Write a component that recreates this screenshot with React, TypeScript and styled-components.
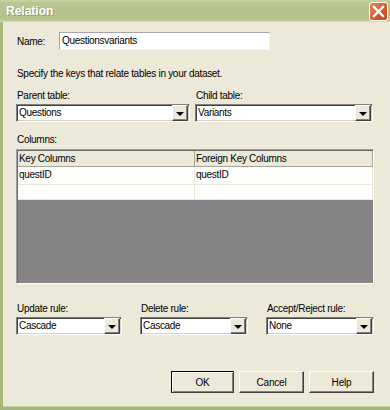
import React from "react";
import styled, { createGlobalStyle } from "styled-components";

const FONT = `"Liberation Sans", Tahoma, Arial, sans-serif`;

const Global = createGlobalStyle`
  html, body { margin: 0; padding: 0; background: #ece9d8; }
  body { font-family: ${FONT}; font-size: 10px; color: #000; }
  * { box-sizing: border-box; }
`;

const Win = styled.div`
  width: 390px;
  height: 410px;
  display: flex;
  flex-direction: column;
  overflow: hidden;
`;

const TitleBar = styled.div`
  height: 22px;
  flex: none;
  display: flex;
  align-items: center;
  justify-content: space-between;
  padding: 0 2px 0 6px;
  background: linear-gradient(#c9d4a4 0px, #b8c58f 3px, #b4c18a 18px, #c3cd9f 21px, #e0e4cf 22px);
`;

const Title = styled.span`
  font-family: ${FONT};
  font-weight: bold;
  font-size: 12px;
  color: #fff;
  text-shadow: 1px 1px 0 #8f9c6a;
`;

const CloseBtn = styled.div`
  width: 19px;
  height: 19px;
  border: 1px solid #fff;
  border-radius: 3px;
  background: linear-gradient(135deg, #e98a5c, #d9552a 60%, #c4431d);
  display: flex;
  align-items: center;
  justify-content: center;
  margin-top: 1px;
`;

const Body = styled.div`
  flex: 1;
  display: flex;
  flex-direction: column;
  border-left: 3px solid #a6b87c;
  border-bottom: 3px solid #a3b57a;
  box-shadow: inset 0 -1px 0 #c8d3a8;
  padding: 10px 16px 0 13px;
  background: #ece9d8;
`;

const Row = styled.div<{ $mt?: number; $gap?: number }>`
  display: flex;
  align-items: flex-start;
  gap: ${(p) => p.$gap ?? 0}px;
  margin-top: ${(p) => p.$mt ?? 0}px;
`;

const Label = styled.div<{ $mt?: number }>`
  font-family: ${FONT};
  font-size: 10px;
  line-height: 13px;
  height: 13px;
  letter-spacing: -0.3px;
  margin-top: ${(p) => p.$mt ?? 0}px;
  padding-left: 1px;
  white-space: nowrap;
`;

const NameLabel = styled(Label)`
  width: 43px;
  margin-top: 3px;
`;

const TextBox = styled.div<{ $w: number }>`
  width: ${(p) => p.$w}px;
  height: 18px;
  background: #fff;
  border-top: 1px solid #a7a6aa;
  border-left: 1px solid #a7a6aa;
  border-right: 1px solid #f3f2ec;
  border-bottom: 1px solid #f3f2ec;
  font-size: 10px;
  line-height: 16px;
  padding-left: 2px;
  letter-spacing: -0.3px;
  white-space: nowrap;
`;

const Field = styled.div<{ $w: number }>`
  display: flex;
  flex-direction: column;
  width: ${(p) => p.$w}px;
  gap: 2px;
`;

const ComboBox = styled.div<{ $w: number }>`
  width: ${(p) => p.$w}px;
  height: 18px;
  display: flex;
  background: #fff;
  border-top: 1px solid #808080;
  border-left: 1px solid #808080;
  border-right: 1px solid #fff;
  border-bottom: 1px solid #fff;
  box-shadow: inset 1px 1px 0 #404040, inset -1px -1px 0 #d4d0c8;
`;

const ComboText = styled.div`
  flex: 1;
  font-size: 10px;
  line-height: 16px;
  padding-left: 2px;
  letter-spacing: -0.3px;
  white-space: nowrap;
  overflow: hidden;
`;

const DropBtn = styled.div`
  width: 16px;
  height: 16px;
  background: #ece9d8;
  border-top: 1px solid #ffffff;
  border-left: 1px solid #ffffff;
  border-right: 1px solid #404040;
  border-bottom: 1px solid #404040;
  box-shadow: inset -1px -1px 0 #808080;
  display: flex;
  align-items: center;
  justify-content: center;
  margin: 0 1px 0 0;
`;

const Arrow = styled.div`
  width: 0;
  height: 0;
  border-left: 4px solid transparent;
  border-right: 4px solid transparent;
  border-top: 4px solid #000;
  margin-top: 1px;
`;

const Grid = styled.div`
  margin-top: 3px;
  width: 358px;
  height: 135px;
  display: flex;
  flex-direction: column;
  border-top: 1px solid #a0a0a0;
  border-left: 1px solid #a0a0a0;
  border-right: 1px solid #fff;
  border-bottom: 1px solid #fff;
  box-shadow: inset 1px 1px 0 #696969;
  padding: 1px 0 0 1px;
  background: #858386;
`;

const GridRow = styled.div<{ $h: number; $head?: boolean }>`
  display: flex;
  height: ${(p) => p.$h}px;
  background: ${(p) => (p.$head ? "#ece9d8" : "#fdfdfb")};
  border-bottom: 1px solid ${(p) => (p.$head ? "#a8a69a" : "#e9e7dc")};
`;

const Cell = styled.div<{ $w?: number; $head?: boolean }>`
  ${(p) => (p.$w ? `width:${p.$w}px;flex:none;` : "flex:1;")}
  font-size: 10px;
  line-height: ${(p) => (p.$head ? "15px" : "16px")};
  padding-left: 1px;
  letter-spacing: -0.3px;
  white-space: nowrap;
  border-right: 1px solid ${(p) => (p.$head ? "#a8a69a" : "#e9e7dc")};
`;

const ButtonRow = styled.div`
  display: flex;
  justify-content: flex-end;
  gap: 5px;
  margin-top: 36px;
`;

const Button = styled.div<{ $default?: boolean }>`
  width: ${(p) => (p.$default ? 63 : 65)}px;
  height: 22px;
  display: flex;
  align-items: center;
  justify-content: center;
  font-size: 10px;
  letter-spacing: -0.2px;
  background: #ece9d8;
  border-top: 1px solid ${(p) => (p.$default ? "#000" : "#fff")};
  border-left: 1px solid ${(p) => (p.$default ? "#000" : "#fff")};
  border-right: 1px solid #404040;
  border-bottom: 1px solid #404040;
  box-shadow: ${(p) =>
    p.$default
      ? "inset 1px 1px 0 #fff, inset -1px -1px 0 #808080"
      : "inset -1px -1px 0 #808080"};
`;

const Combo = ({ w, value }: { w: number; value: string }) => (
  <ComboBox $w={w}>
    <ComboText>{value}</ComboText>
    <DropBtn>
      <Arrow />
    </DropBtn>
  </ComboBox>
);

export default function App() {
  return (
    <Win>
      <Global />
      <TitleBar>
        <Title>Relation</Title>
        <CloseBtn>
          <svg width="13" height="13" viewBox="0 0 13 13">
            <path d="M2 2 L11 11 M11 2 L2 11" stroke="#fff" strokeWidth="2.4" strokeLinecap="square" />
          </svg>
        </CloseBtn>
      </TitleBar>
      <Body>
        <Row>
          <NameLabel>Name:</NameLabel>
          <TextBox $w={211}>Questionsvariants</TextBox>
        </Row>
        <Label $mt={17}>Specify the keys that relate tables in your dataset.</Label>
        <Row $mt={9} $gap={5}>
          <Field $w={174}>
            <Label>Parent table:</Label>
            <Combo w={174} value="Questions" />
          </Field>
          <Field $w={178}>
            <Label>Child table:</Label>
            <Combo w={178} value="Variants" />
          </Field>
        </Row>
        <Label $mt={11}>Columns:</Label>
        <Grid>
          <GridRow $h={16} $head>
            <Cell $w={177} $head>Key Columns</Cell>
            <Cell $head>Foreign Key Columns</Cell>
          </GridRow>
          <GridRow $h={18}>
            <Cell $w={177}>questID</Cell>
            <Cell>questID</Cell>
          </GridRow>
          <GridRow $h={15}>
            <Cell $w={177}></Cell>
            <Cell></Cell>
          </GridRow>
        </Grid>
        <Row $mt={18} $gap={18}>
          <Field $w={106}>
            <Label>Update rule:</Label>
            <Combo w={106} value="Cascade" />
          </Field>
          <Field $w={108}>
            <Label>Delete rule:</Label>
            <Combo w={108} value="Cascade" />
          </Field>
          <Field $w={108}>
            <Label>Accept/Reject rule:</Label>
            <Combo w={108} value="None" />
          </Field>
        </Row>
        <ButtonRow>
          <Button $default>OK</Button>
          <Button>Cancel</Button>
          <Button>Help</Button>
        </ButtonRow>
      </Body>
    </Win>
  );
}
